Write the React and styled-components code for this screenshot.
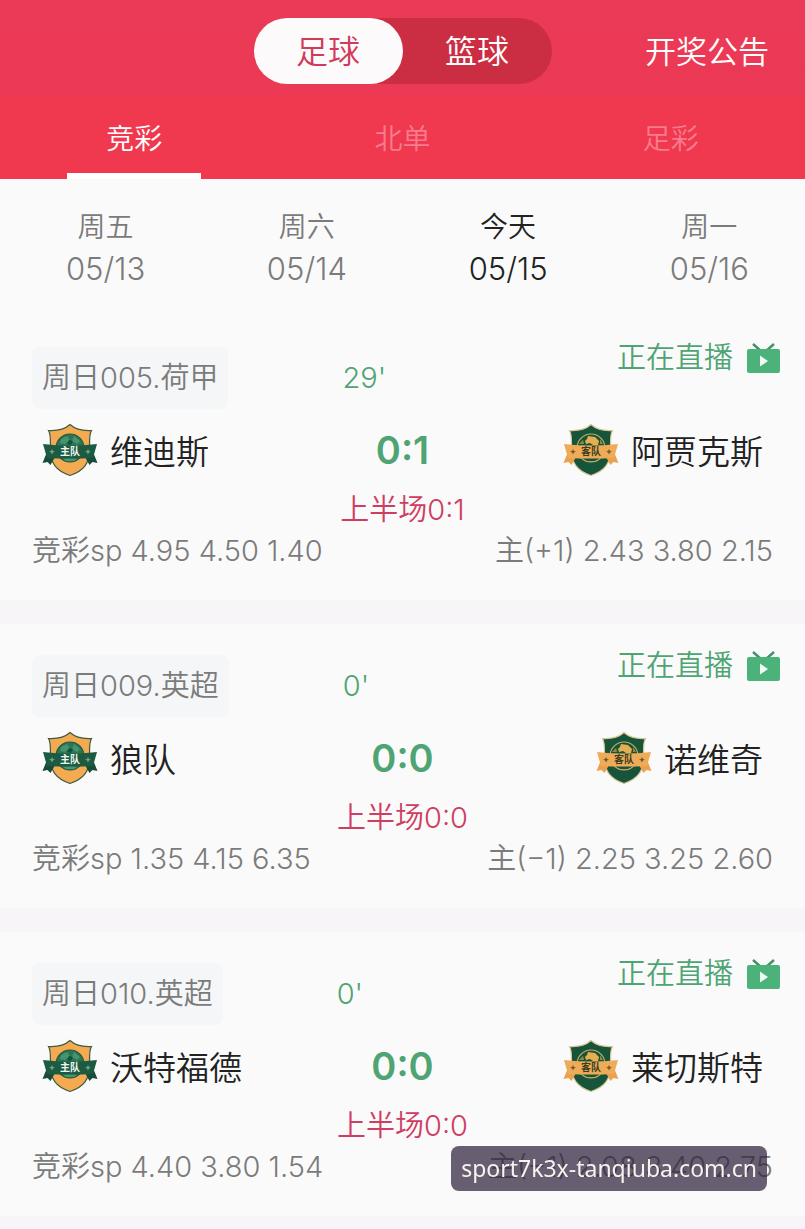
import React from "react";
import styled, { createGlobalStyle } from "styled-components";

const GlobalStyle = createGlobalStyle`
  * {
    box-sizing: border-box;
  }

  body {
    margin: 0;
    background: #f8f5f8;
    font-family: Inter, "Noto Sans CJK SC", sans-serif;
    font-size: 28px;
    font-weight: 350;
    color: #7b7b7b;
  }

  button {
    border: none;
    padding: 0;
    background: none;
    color: inherit;
    font: inherit;
    cursor: pointer;
  }

  a {
    text-decoration: none;
  }
`;

const Header = styled.header`
  background: linear-gradient(#ea3a57 0, #ec3955 94px, #f0384f 98px, #f0384f 100%);
  color: #fff;
`;

const TopBar = styled.div`
  display: grid;
  grid-template-columns: 1fr auto 1fr;
  align-items: center;
  height: 98px;
  padding: 4px 36px 0;
`;

const Switch = styled.div`
  display: flex;
  grid-column: 2;
  border-radius: 33px;
  background: #cb2e42;
`;

const SwitchButton = styled.button`
  width: 149px;
  height: 66px;
  padding-bottom: 4px;
  border-radius: 33px;
  font-size: 32px;
  background: ${props => (props.$active ? "#fcfafb" : "transparent")};
  color: ${props => (props.$active ? "#d23a5a" : "#fff")};
`;

const NoticeLink = styled.a`
  justify-self: end;
  padding-bottom: 4px;
  font-size: 31px;
  color: #fff;
`;

const Tabs = styled.nav`
  display: flex;
`;

const Tab = styled.button`
  display: flex;
  flex: 1;
  flex-direction: column;
  align-items: center;
  height: 81px;
  line-height: 82px;
  color: ${props => (props.$active ? "#fff" : "#f77d8d")};

  &::after {
    content: "";
    width: 50%;
    height: 6px;
    margin-top: -7px;
    background: ${props => (props.$active ? "#fff" : "transparent")};
  }
`;

const Days = styled.div`
  display: flex;
  overflow: hidden;
  padding: 28px 0 27px 5px;
  background: #fafafa;
`;

const Day = styled.button`
  flex: 0 0 25vw;
  line-height: 41px;
  color: ${props => (props.$active ? "#222" : "#7b7b7b")};
`;

const DayName = styled.span`
  display: block;
`;

const DayDate = styled.span`
  display: block;
  font-size: 31px;
`;

const MatchList = styled.main`
  display: flex;
  flex-direction: column;
  gap: 24px;
`;

const Card = styled.article`
  padding: 21px 32px 29px;
  background: #fafafa;
  font-size: 29px;
`;

const InfoRow = styled.div`
  display: flex;
  align-items: flex-start;
  line-height: 62px;
`;

const League = styled.span`
  margin-top: 10px;
  padding: 0 10px;
  border-radius: 8px;
  background: #f5f6f8;
`;

const Minute = styled.span`
  margin: 10px auto 0 114px;
  color: #4fa473;
`;

const Live = styled.a`
  display: flex;
  align-items: center;
  gap: 14px;
  margin-right: -7px;
  line-height: 42px;
  color: #4fa473;
`;

const TeamRow = styled.div`
  display: grid;
  grid-template-columns: 1fr auto 1fr;
  align-items: center;
  height: 82px;
  padding: 0 10px;
`;

const Team = styled.div`
  display: flex;
  align-items: center;
  justify-self: ${props => (props.$away ? "end" : "start")};
  gap: 12px;
  font-size: 33px;
  color: #222;
`;

const Score = styled.strong`
  font-size: 38px;
  font-weight: 600;
  color: #4fa473;
`;

const HalfScore = styled.div`
  margin-top: 4px;
  line-height: 30px;
  text-align: center;
  color: #cf3d62;
`;

const OddsRow = styled.div`
  display: flex;
  justify-content: space-between;
  margin-top: 6px;
  line-height: 40px;
`;

const SiteLabel = styled.div`
  position: fixed;
  right: 38px;
  bottom: 38px;
  padding: 0 10px;
  border-radius: 8px;
  background: rgba(50, 36, 62, 0.73);
  font-family: "Noto Sans", "Open Sans", sans-serif;
  font-size: 23px;
  font-weight: 400;
  line-height: 45px;
  color: #f8f3ee;
`;

const TvIcon = () => (
  <svg width="33" height="30" viewBox="0 0 33 30" aria-hidden="true">
    <path d="M6 1l8 7M27 1l-8 7" stroke="#478e68" strokeWidth="2.400" fill="none" />
    <rect x="0" y="6" width="33" height="24" rx="2" fill="#4bb37a" />
    <path d="M13 12.5v11l8-5.500z" fill="#f2fbf5" />
  </svg>
);

const TeamBadge = ({ away }) => {
  const shield = away ? "#17553b" : "#f3aa50";
  const ribbon = away ? "#f0ab58" : "#1d5a42";
  const fold = away ? "#eba24f" : "#174d38";
  const edge = away ? "#d9c797" : "#3f5b42";
  const ink = away ? "#3b3f22" : "#eef7f0";

  return (
    <svg width="56" height="54" viewBox="0 0 56 54" aria-hidden="true">
      <path
        d="M28 1.500C23 6 15 8 6.500 7.500C9.500 13 8 19 8.500 27C8.500 40 14 48 28 52.500C42 48 47.500 40 47.500 27C48 19 46.500 13 49.500 7.500C41 8 33 6 28 1.500z"
        fill={shield}
        stroke={edge}
        strokeWidth="1.2"
      />
      <circle
        cx="28"
        cy="25"
        r="14"
        fill={away ? "#17553b" : "#2b7654"}
        stroke={away ? "#c9ad66" : "#24573d"}
        strokeWidth="1.2"
      />
      {away ? (
        <g fill="#e6ad51">
          <path d="M22 18l2-2 1-3 7 1 4 4-1 4h-5l-3-2-4 1z" />
          <path d="M16 21l4-4 1 4zM37 16l3 5h-3z" opacity=".6" />
          <path d="M19 36q9 5 18 0l-3 2q-6 2-12 0z" />
        </g>
      ) : (
        <g>
          <path d="M19 16l6-3 3 4-5 4-5-1zM32 13l6 5-3 3-5-3z" fill="#469370" />
          <path d="M27 17l4 1-2 4-4-1z" fill="#15513a" />
          <path d="M21 36l7-1 7 1-3 2h-8z" fill="#4b9773" />
        </g>
      )}
      <path d="M5 29L.500 40l5-1 3 3 4-7zM51 29l4.500 11-5-1-3 3-4-7z" fill={fold} />
      <path d="M1 21q27 3 54 0l-4 14q-23 1-46 0z" fill={ribbon} />
      <path
        d="M10 26l1 2 2 .5-2 1-1 2-1-2-2-1 2-.5zM46 26l1 2 2 .5-2 1-1 2-1-2-2-1 2-.5z"
        fill={away ? "#6f5a2c" : "#6fa388"}
      />
      <text
        x="28"
        y="32"
        textAnchor="middle"
        fontFamily="'Noto Sans CJK SC', sans-serif"
        fontSize="10"
        fontWeight="700"
        fill={ink}
      >
        {away ? "客队" : "主队"}
      </text>
    </svg>
  );
};

const days = [
  { name: "周五", date: "05/13" },
  { name: "周六", date: "05/14" },
  { name: "今天", date: "05/15" },
  { name: "周一", date: "05/16" }
];

const matches = [
  {
    league: "周日005.荷甲",
    minute: "29'",
    home: "维迪斯",
    away: "阿贾克斯",
    score: "0:1",
    half: "0:1",
    odds: "4.95 4.50 1.40",
    handicap: "主(+1) 2.43 3.80 2.15"
  },
  {
    league: "周日009.英超",
    minute: "0'",
    home: "狼队",
    away: "诺维奇",
    score: "0:0",
    half: "0:0",
    odds: "1.35 4.15 6.35",
    handicap: "主(−1) 2.25 3.25 2.60"
  },
  {
    league: "周日010.英超",
    minute: "0'",
    home: "沃特福德",
    away: "莱切斯特",
    score: "0:0",
    half: "0:0",
    odds: "4.40 3.80 1.54",
    handicap: "主(−1) 2.08 3.40 2.75"
  }
];

const Match = ({ match }) => (
  <Card>
    <InfoRow>
      <League>{match.league}</League>
      <Minute>{match.minute}</Minute>
      <Live href="#live">
        正在直播
        <TvIcon />
      </Live>
    </InfoRow>
    <TeamRow>
      <Team>
        <TeamBadge />
        {match.home}
      </Team>
      <Score>{match.score}</Score>
      <Team $away>
        <TeamBadge away />
        {match.away}
      </Team>
    </TeamRow>
    <HalfScore>上半场{match.half}</HalfScore>
    <OddsRow>
      <span>竞彩sp {match.odds}</span>
      <span>{match.handicap}</span>
    </OddsRow>
  </Card>
);

class App extends React.Component {
  constructor() {
    super();
    this.state = {
      sport: "足球",
      tab: "竞彩",
      day: "05/15"
    };
  }

  render() {
    const { sport, tab, day } = this.state;

    return (
      <>
        <GlobalStyle />
        <Header>
          <TopBar>
            <Switch>
              {["足球", "篮球"].map(name => (
                <SwitchButton
                  key={name}
                  $active={name === sport}
                  onClick={() => this.setState({ sport: name })}
                >
                  {name}
                </SwitchButton>
              ))}
            </Switch>
            <NoticeLink href="#notice">开奖公告</NoticeLink>
          </TopBar>
          <Tabs>
            {["竞彩", "北单", "足彩"].map(name => (
              <Tab
                key={name}
                $active={name === tab}
                onClick={() => this.setState({ tab: name })}
              >
                {name}
              </Tab>
            ))}
          </Tabs>
        </Header>
        <Days>
          {days.map(item => (
            <Day
              key={item.date}
              $active={item.date === day}
              onClick={() => this.setState({ day: item.date })}
            >
              <DayName>{item.name}</DayName>
              <DayDate>{item.date}</DayDate>
            </Day>
          ))}
        </Days>
        <MatchList>
          {matches.map(match => (
            <Match key={match.league} match={match} />
          ))}
        </MatchList>
        <SiteLabel>sport7k3x-tanqiuba.com.cn</SiteLabel>
      </>
    );
  }
}

export default App;
